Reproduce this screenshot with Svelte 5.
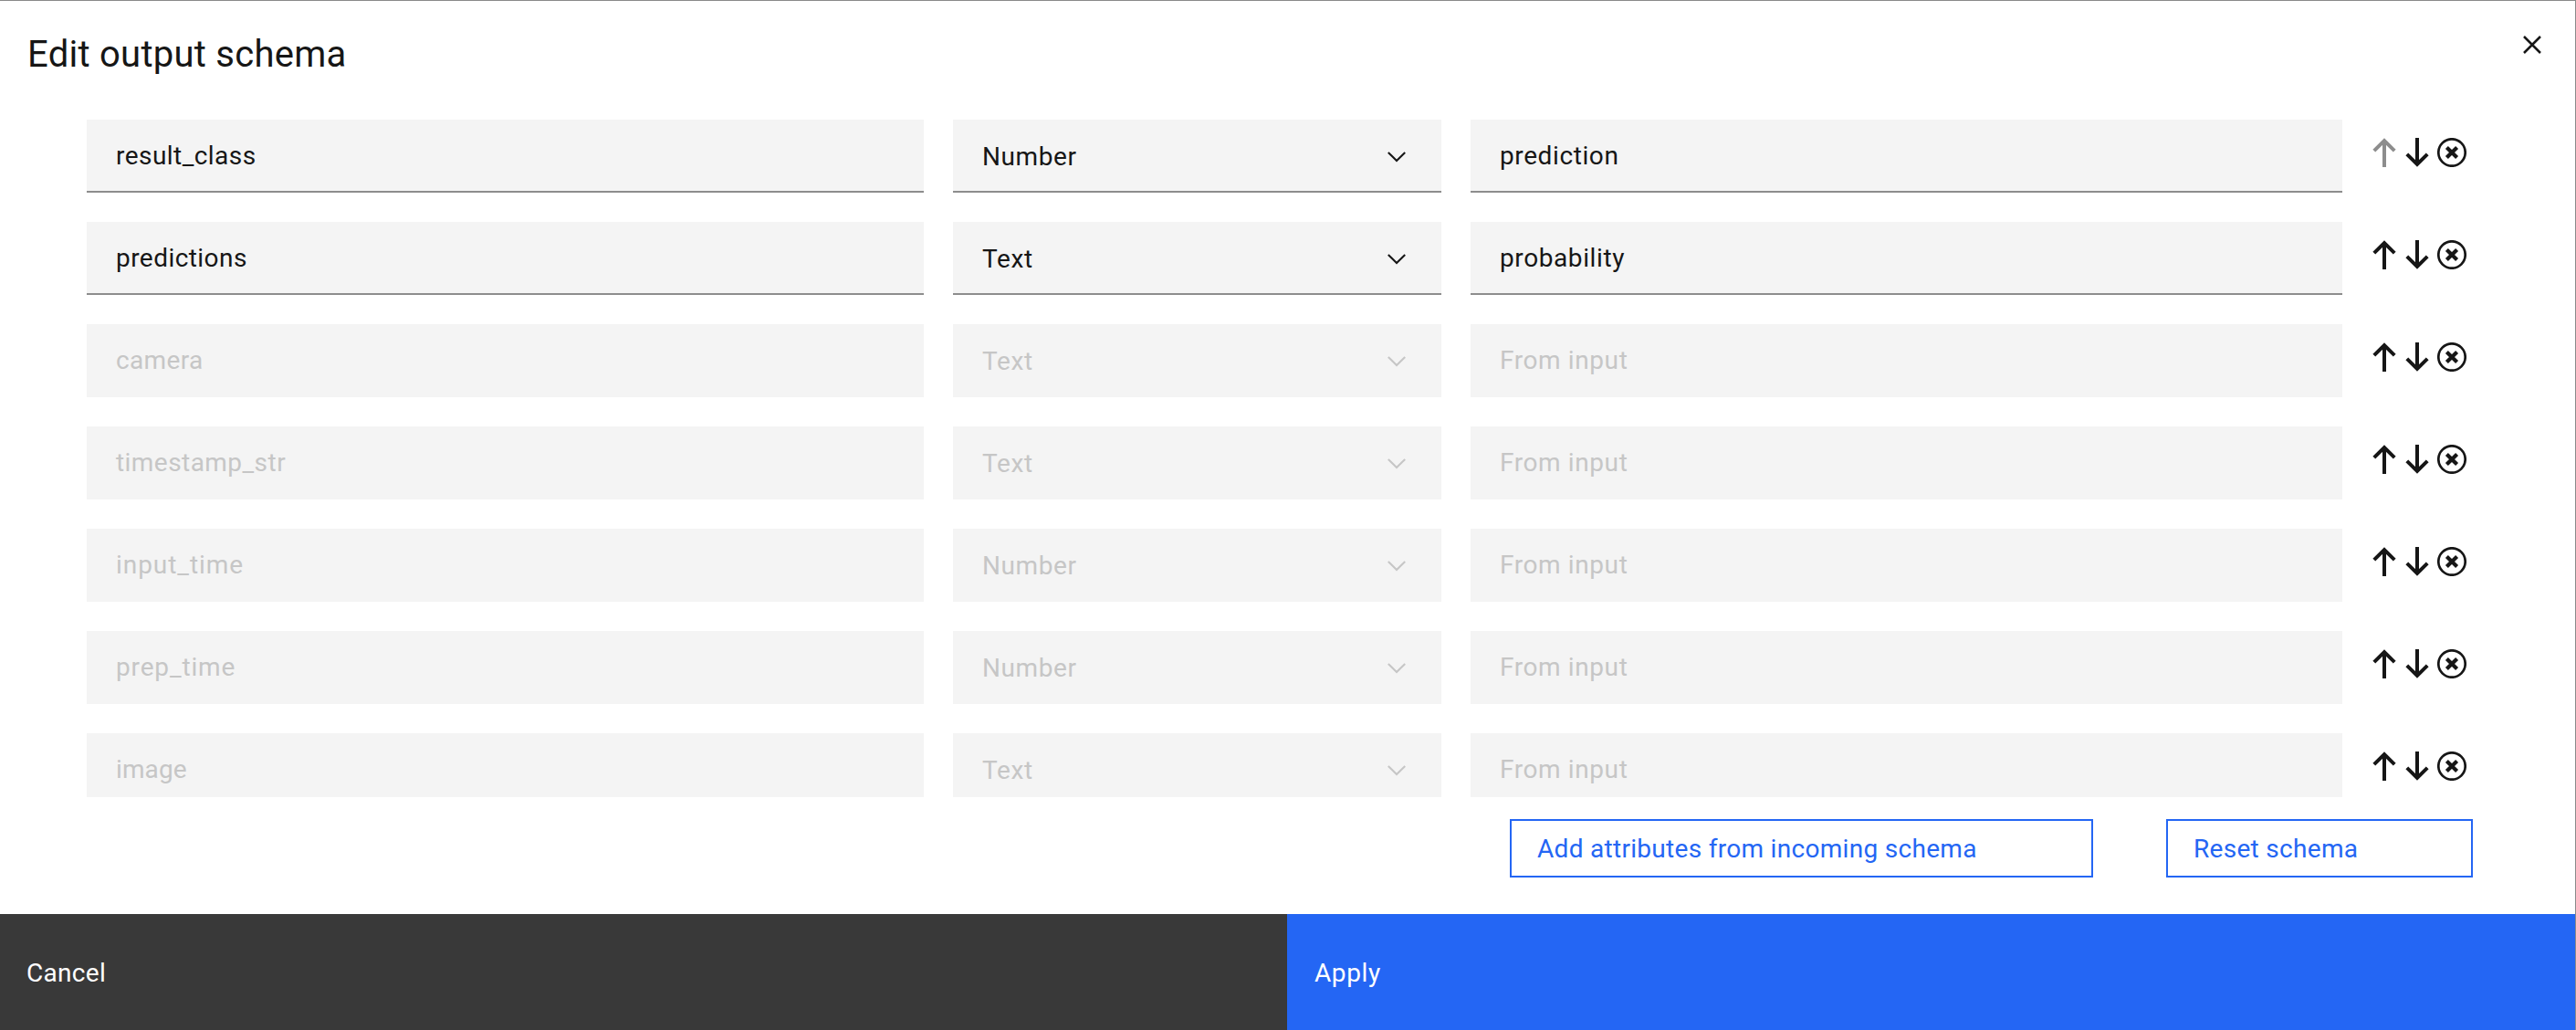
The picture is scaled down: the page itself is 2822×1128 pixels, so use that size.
<script>
  const rows = [
    { name: 'result_class', type: 'Number', source: 'prediction', editable: true, tracking: 0.45 },
    { name: 'predictions', type: 'Text', source: 'probability', editable: true, tracking: 0.45 },
    { name: 'camera', type: 'Text', source: 'From input', editable: false, tracking: 0.35 },
    { name: 'timestamp_str', type: 'Text', source: 'From input', editable: false, tracking: 0.45 },
    { name: 'input_time', type: 'Number', source: 'From input', editable: false, tracking: 0.95 },
    { name: 'prep_time', type: 'Number', source: 'From input', editable: false, tracking: 0.85 },
    { name: 'image', type: 'Text', source: 'From input', editable: false, tracking: 0.1 },
  ];
</script>

<div class="modal">
  <header>
    <h1>Edit output schema</h1>
    <svg class="close" viewBox="0 0 20 20" aria-label="Close">
      <path d="M1 1L19 19M19 1L1 19" stroke="#161616" stroke-width="2.5" fill="none" />
    </svg>
  </header>

  <div class="list">
    {#each rows as row, i}
      <div class="row" class:disabled={!row.editable}>
        <div class="field"><span style:letter-spacing="{row.tracking}px">{row.name}</span></div>
        <div class="field select">
          <span>{row.type}</span>
          <svg class="chevron" viewBox="0 0 20 12"><path d="M0.8 0.9L10 10L19.2 0.9" stroke="currentColor" stroke-width="2.1" fill="none" /></svg>
        </div>
        <div class="field"><span>{row.source}</span></div>
        <div class="actions">
          <svg class="arrow" class:muted={i === 0} viewBox="0 0 26 32"><path d="M13 32V3M1.8 14.2L13 3L24.2 14.2" /></svg>
          <svg class="arrow" viewBox="0 0 26 32"><path d="M13 0V29M1.8 17.8L13 29L24.2 17.8" /></svg>
          <svg class="remove" viewBox="0 0 32 32">
            <circle cx="16" cy="16" r="14.7" stroke-width="2.7" />
            <path d="M10.4 10.4L21.6 21.6M21.6 10.4L10.4 21.6" stroke-width="4.2" />
          </svg>
        </div>
      </div>
    {/each}
  </div>

  <div class="tools">
    <button class="outline add">Add attributes from incoming schema</button>
    <button class="outline reset">Reset schema</button>
  </div>

  <footer>
    <button class="cancel">Cancel</button>
    <button class="apply">Apply</button>
  </footer>
</div>

<style>
  :global(body) { margin: 0; background: #fff; }
  .modal {
    box-sizing: border-box;
    width: 2822px;
    height: 1128px;
    display: flex;
    flex-direction: column;
    overflow: hidden;
    background: #fff;
    border-top: 1px solid #8a8a8a;
    border-right: 1px solid #8a8a8a;
    color: #161616;
    font-family: Roboto, "Liberation Sans", sans-serif;
    font-size: 28px;
    font-weight: 400;
    letter-spacing: 0.6px;
  }
  header {
    display: flex;
    justify-content: space-between;
    align-items: flex-start;
    height: 130px;
    padding: 0 37px 0 30px;
    box-sizing: border-box;
    flex: none;
  }
  h1 { margin: 35px 0 0; font-size: 40px; line-height: 48px; font-weight: 400; letter-spacing: 0.27px; }
  .close { width: 20px; height: 20px; margin-top: 38px; }
  .list { height: 742px; overflow: hidden; padding-left: 95px; flex: none; }
  .row {
    display: grid;
    grid-template-columns: 917px 535px 955px 106px;
    column-gap: 32px;
    height: 80px;
    margin-bottom: 32px;
  }
  .field {
    box-sizing: border-box;
    height: 80px;
    padding: 0 32px;
    background: #f4f4f4;
    border-bottom: 2px solid #8d8d8d;
    line-height: 80px;
    white-space: nowrap;
  }
  .select { display: flex; justify-content: space-between; align-items: center; padding: 3px 39px 0 32px; }
  .chevron { width: 20px; height: 12px; }
  .disabled .field { color: #c6c6c6; border-color: #f4f4f4; }
  .actions { display: flex; padding: 20px 0 0 1px; }
  .actions svg { fill: none; stroke: #161616; height: 32px; flex: none; }
  .arrow { width: 26px; stroke-width: 4; margin-right: 10px; }
  .actions .arrow.muted { stroke: #8d8d8d; }
  .remove { width: 32px; margin-left: -1px; }
  .tools { display: flex; justify-content: flex-end; gap: 80px; margin: 24px 112px 40px 0; flex: none; }
  button { border: 0; background: none; font: inherit; letter-spacing: 0.3px; text-align: left; margin: 0; border-radius: 0; }
  .outline { box-sizing: border-box; height: 64px; padding: 0 28px; border: 2px solid #2466f4; color: #2466f4; }
  .add { width: 639px; }
  .reset { width: 336px; }
  footer { display: flex; flex: 1; color: #fff; }
  footer button { color: #fff; padding: 1px 0 0 29px; }
  .cancel { width: 1410px; background: #393939; }
  footer .apply { flex: 1; padding-left: 30px; background: #2466f4; letter-spacing: 0.6px; }
</style>
